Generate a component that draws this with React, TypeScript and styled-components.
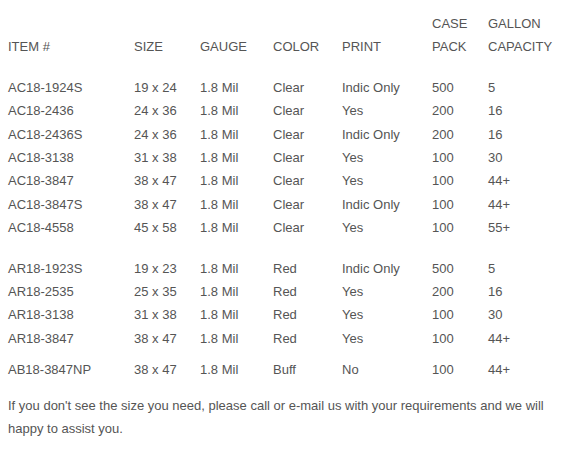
import React from "react";
import styled, { createGlobalStyle } from "styled-components";

const Global = createGlobalStyle`
  html, body { margin: 0; padding: 0; background: #ffffff; }
  body {
    font-family: "Liberation Sans", Arial, sans-serif;
    font-size: 13px;
    line-height: 1.8;
    color: #555555;
  }
`;

const Page = styled.div`
  padding: 12px 8px 0 8px;
`;

const Table = styled.table`
  border-collapse: collapse;
  border-spacing: 0;
  table-layout: fixed;
  width: 560px;
`;

const Col = styled.col<{ $w: number }>`
  width: ${(p) => p.$w}px;
`;

const HeadCell = styled.th`
  padding: 0;
  font-weight: normal;
  text-align: left;
  vertical-align: bottom;
  line-height: 23.4px;
`;

const Cell = styled.td`
  padding: 0;
  text-align: left;
  vertical-align: middle;
  white-space: nowrap;
  line-height: 23.4px;
`;

const SpacerRow = styled.tr<{ $h: number }>`
  height: ${(p) => p.$h}px;
`;

const Note = styled.p`
  margin: 12px 0 0 0;
  line-height: 23.4px;
  width: 540px;
`;

type Row = [string, string, string, string, string, string, string];

const clear: Row[] = [
  ["AC18-1924S", "19 x 24", "1.8 Mil", "Clear", "Indic Only", "500", "5"],
  ["AC18-2436", "24 x 36", "1.8 Mil", "Clear", "Yes", "200", "16"],
  ["AC18-2436S", "24 x 36", "1.8 Mil", "Clear", "Indic Only", "200", "16"],
  ["AC18-3138", "31 x 38", "1.8 Mil", "Clear", "Yes", "100", "30"],
  ["AC18-3847", "38 x 47", "1.8 Mil", "Clear", "Yes", "100", "44+"],
  ["AC18-3847S", "38 x 47", "1.8 Mil", "Clear", "Indic Only", "100", "44+"],
  ["AC18-4558", "45 x 58", "1.8 Mil", "Clear", "Yes", "100", "55+"],
];

const red: Row[] = [
  ["AR18-1923S", "19 x 23", "1.8 Mil", "Red", "Indic Only", "500", "5"],
  ["AR18-2535", "25 x 35", "1.8 Mil", "Red", "Yes", "200", "16"],
  ["AR18-3138", "31 x 38", "1.8 Mil", "Red", "Yes", "100", "30"],
  ["AR18-3847", "38 x 47", "1.8 Mil", "Red", "Yes", "100", "44+"],
];

const buff: Row[] = [
  ["AB18-3847NP", "38 x 47", "1.8 Mil", "Buff", "No", "100", "44+"],
];

const widths = [126, 66, 73, 69, 90, 56, 80];

const DataRows = ({ rows }: { rows: Row[] }) => (
  <>
    {rows.map((r) => (
      <tr key={r[0]}>
        {r.map((c, i) => (
          <Cell key={i}>{c}</Cell>
        ))}
      </tr>
    ))}
  </>
);

export default function App() {
  return (
    <>
      <Global />
      <Page>
        <Table>
          <colgroup>
            {widths.map((w, i) => (
              <Col key={i} $w={w} />
            ))}
          </colgroup>
          <thead>
            <tr>
              <HeadCell>ITEM #</HeadCell>
              <HeadCell>SIZE</HeadCell>
              <HeadCell>GAUGE</HeadCell>
              <HeadCell>COLOR</HeadCell>
              <HeadCell>PRINT</HeadCell>
              <HeadCell>
                CASE
                <br />
                PACK
              </HeadCell>
              <HeadCell>
                GALLON
                <br />
                CAPACITY
              </HeadCell>
            </tr>
          </thead>
          <tbody>
            <SpacerRow $h={17} />
            <DataRows rows={clear} />
            <SpacerRow $h={17} />
            <DataRows rows={red} />
            <SpacerRow $h={8} />
            <DataRows rows={buff} />
          </tbody>
        </Table>
        <Note>
          If you don't see the size you need, please call or e-mail us with your
          requirements and we will happy to assist you.
        </Note>
      </Page>
    </>
  );
}
